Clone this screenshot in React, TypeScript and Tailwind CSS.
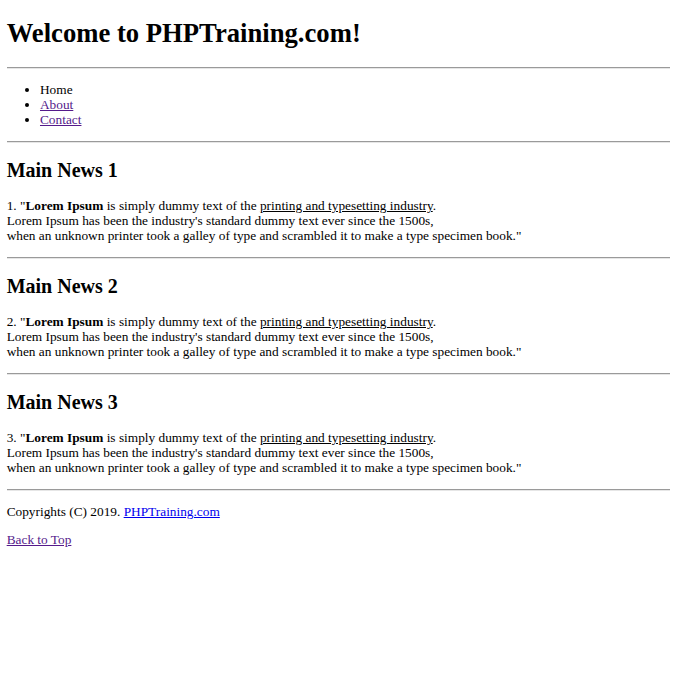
const news = [1, 2, 3];

const Rule = () => (
  <hr className="my-[6.67px] h-0 border-0 border-t border-b border-t-[#9a9a9a] border-b-[#e6e6e6]" />
);

const NewsItem = ({ n }: { n: number }) => (
  <>
    <h2 className="my-[16.6px] text-[20px] font-bold leading-[22.5px]">Main News {n}</h2>
    <p className="my-[13.33px] leading-[15px]">
      {n}. "<b>Lorem Ipsum</b> is simply dummy text of the <u>printing and typesetting industry</u>.
      <br />
      Lorem Ipsum has been the industry's standard dummy text ever since the 1500s,
      <br />
      when an unknown printer took a galley of type and scrambled it to make a type specimen book."
    </p>
  </>
);

const App = () => {
  return (
    <div className="min-h-screen bg-white px-[6.67px] pt-px font-['Liberation_Serif',serif] text-[13.33px] leading-[15px] text-black">
      <h1 className="mt-[17.4px] mb-[17.87px] text-[26.67px] font-bold leading-[1.15]">
        Welcome to PHPTraining.com!
      </h1>
      <Rule />
      <ul className="my-[13.33px] list-disc pl-[33.33px]">
        <li>Home</li>
        <li>
          <a href="#" className="text-[#551a8b] underline">About</a>
        </li>
        <li>
          <a href="#" className="text-[#551a8b] underline">Contact</a>
        </li>
      </ul>
      {news.map((n) => (
        <div key={n}>
          <Rule />
          <NewsItem n={n} />
        </div>
      ))}
      <Rule />
      <p className="my-[13.33px]">
        Copyrights (C) 2019. <a href="#" className="text-[#0000ee] underline">PHPTraining.com</a>
      </p>
      <p className="my-[13.33px]">
        <a href="#" className="text-[#551a8b] underline">Back to Top</a>
      </p>
    </div>
  );
};

export default App;
